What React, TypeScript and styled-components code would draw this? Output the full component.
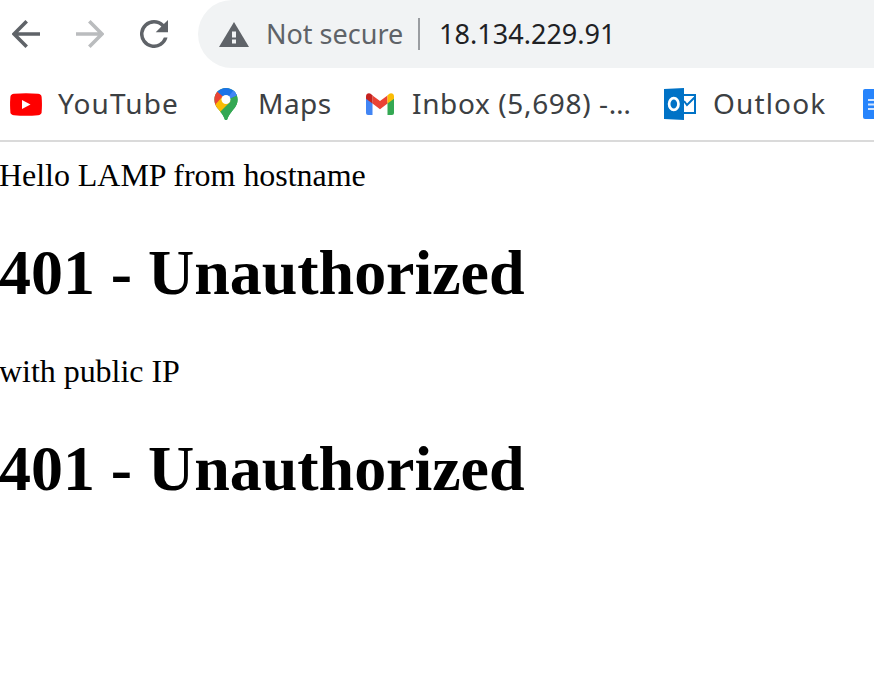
import React from 'react';
import styled, { createGlobalStyle } from 'styled-components';

const GlobalStyle = createGlobalStyle`
  * { box-sizing: border-box; }
  body { margin: 0; background: #fff; overflow: hidden; }
  svg { display: block; flex: none; }
`;

const Browser = styled.div`
  width: 100%;
  height: 684px;
  overflow: hidden;
  background: #fff;
`;

const Toolbar = styled.header`
  display: flex;
  height: 68px;
`;

const Navigation = styled.nav`
  display: flex;
  align-items: center;
  gap: 36px;
  flex: none;
  width: 198px;
  padding-left: 12px;
`;

const AddressBar = styled.div`
  display: flex;
  align-items: center;
  flex: 1;
  padding-left: 21px;
  border-radius: 34px 0 0 34px;
  background: #f1f3f4;
  font-family: 'Noto Sans', sans-serif;
  font-size: 27px;
  line-height: 68px;
  white-space: nowrap;
`;

const Security = styled.span`
  width: 152px;
  margin-left: 17px;
  color: #5f6368;
`;

const Divider = styled.span`
  width: 2px;
  height: 32px;
  margin-right: 19px;
  background: #9a9da1;
`;

const Address = styled.span`
  color: #202124;
  letter-spacing: 0.03px;
`;

const Bookmarks = styled.div`
  display: flex;
  align-items: center;
  height: 74px;
  padding: 0 0 2px 10px;
  border-bottom: 2px solid #dadada;
  overflow: hidden;
`;

const Bookmark = styled.div<{ $width: number; $gap: number; $tracking?: number }>`
  display: flex;
  align-items: center;
  flex: none;
  width: ${p => p.$width}px;
  gap: ${p => p.$gap}px;
  font-family: 'Noto Sans', sans-serif;
  font-size: 28px;
  line-height: 68px;
  letter-spacing: ${p => p.$tracking ?? 0}px;
  white-space: nowrap;
  color: #3c4043;

  svg { margin-top: 2px; }
`;

const Page = styled.main`
  margin-left: -1px;
  padding-top: 15px;
  font-family: 'Liberation Serif', serif;
  letter-spacing: -0.04px;
  color: #000;
`;

const Line = styled.p`
  margin: 0;
  font-size: 32px;
  line-height: 36px;
`;

const Heading = styled.h1`
  margin: 43px 0;
  font-size: 64px;
  line-height: 74px;
`;

const BackIcon = () => (
  <svg width="28" height="28" viewBox="0 0 28 28" fill="none" stroke="#5f6368" strokeWidth="3.6">
    <path d="M28 14H2.500M14.700 1.300 2 14l12.700 12.700" />
  </svg>
);

const ForwardIcon = () => (
  <svg width="28" height="28" viewBox="0 0 28 28" fill="none" stroke="#babcbe" strokeWidth="3.6">
    <path d="M0 14h25.500M13.300 1.300 26 14 13.300 26.700" />
  </svg>
);

const ReloadIcon = () => (
  <svg width="28" height="28" viewBox="4 4 16 16" fill="#5f6368">
    <path d="M17.65 6.35A7.96 7.96 0 0 0 12 4a8 8 0 1 0 7.73 10h-2.08A6 6 0 1 1 12 6c1.66 0 3.14.69 4.22 1.78L13 11h7V4z" />
  </svg>
);

const WarningIcon = () => (
  <svg width="30" height="25" viewBox="0 0 30 25">
    <path d="M15 0 30 25H0z" fill="#5f6368" />
    <path d="M13 9.500h4v6h-4zm0 8h4v4h-4z" fill="#f1f3f4" />
  </svg>
);

const YouTubeIcon = () => (
  <svg width="32" height="23" viewBox="0 0 32 24" preserveAspectRatio="none">
    <path d="M4 .9Q16-.2 28 .9 31.200 1.200 31.600 4q.7 8 0 16-.4 2.800-3.600 3.100-12 1.100-24 0Q.8 22.800.4 20q-.7-8 0-16Q.8 1.200 4 .9z" fill="#f00" />
    <path d="M12 7.300 20.500 12 12 16.700z" fill="#fff" />
  </svg>
);

const MapsIcon = () => (
  <svg width="24" height="32" viewBox="0 0 24 32">
    <defs>
      <clipPath id="pin">
        <path d="M12 0C5.400 0 .4 5 .4 11.500c0 5 2.500 8 5.600 11.700 2.500 3 4 5.800 4.700 8 .4 1.200 2.200 1.200 2.600 0 .7-2.200 2.200-5 4.700-8 3.100-3.700 5.600-6.700 5.600-11.700C23.600 5 18.600 0 12 0z" />
      </clipPath>
    </defs>
    <g clipPath="url(#pin)">
      <path d="M0 0h24v32H0z" fill="#34a853" />
      <path d="M0 0h24v7L12 12 3 4z" fill="#1a73e8" />
      <path d="M12 12 20 1.500 24 7z" fill="#4285f4" />
      <path d="M3 3.500 12 11 3 21H0V4z" fill="#ea4335" />
      <path d="M0 18 9 8l8 6L6.500 26z" fill="#fbbc04" />
      <path d="M24 6 6 24l2 8h16z" fill="#34a853" />
    </g>
    <circle cx="12" cy="11.500" r="4.500" fill="#fff" />
  </svg>
);

const GmailIcon = () => (
  <svg width="28" height="22" viewBox="0 0 28 22">
    <path d="M0 5l6.500 4.500V22H2Q0 22 0 20z" fill="#4285f4" />
    <path d="M21.500 9.500 28 5v15q0 2-2 2h-4.500z" fill="#34a853" />
    <path d="M6.500 2.500 14 8l7.500-5.500v8L14 16.200 6.500 10.500z" fill="#ea4335" />
    <path d="M0 3.300C0 .5 3-.6 5 1l1.500 1.500v8L0 5.700z" fill="#c5221f" />
    <path d="M28 3.300C28 .5 25-.6 23 1l-1.500 1.500v8L28 5.700z" fill="#fbbc04" />
  </svg>
);

const OutlookIcon = () => (
  <svg width="32" height="32" viewBox="0 0 32 32">
    <path d="M19 7h12v18H19M20 13l3 4 8-8" fill="none" stroke="#0072c6" strokeWidth="2" />
    <path d="M0 1 20 0v32L0 31z" fill="#0072c6" />
    <ellipse cx="9.800" cy="16" rx="4.700" ry="5.900" fill="none" stroke="#fff" strokeWidth="2.700" />
  </svg>
);

const DocumentIcon = () => (
  <svg width="24" height="30" viewBox="0 0 24 30">
    <rect width="24" height="30" rx="2" fill="#2684fc" />
    <path d="M5 11h14M5 15.500h14M5 20h14" stroke="#d3e5fd" strokeWidth="2" />
  </svg>
);

export default function App() {
  return (
    <Browser>
      <GlobalStyle />
      <Toolbar>
        <Navigation>
          <BackIcon />
          <ForwardIcon />
          <ReloadIcon />
        </Navigation>
        <AddressBar>
          <WarningIcon />
          <Security>Not secure</Security>
          <Divider />
          <Address>18.134.229.91</Address>
        </AddressBar>
      </Toolbar>
      <Bookmarks>
        <Bookmark $width={204} $gap={16} $tracking={1.1}><YouTubeIcon />YouTube</Bookmark>
        <Bookmark $width={152} $gap={20} $tracking={0.5}><MapsIcon />Maps</Bookmark>
        <Bookmark $width={298} $gap={18} $tracking={0.64}><GmailIcon />Inbox (5,698) -…</Bookmark>
        <Bookmark $width={199} $gap={17} $tracking={1.15}><OutlookIcon />Outlook</Bookmark>
        <Bookmark $width={24} $gap={0}><DocumentIcon /></Bookmark>
      </Bookmarks>
      <Page>
        <Line>Hello LAMP from hostname</Line>
        <Heading>401 - Unauthorized</Heading>
        <Line>with public IP</Line>
        <Heading>401 - Unauthorized</Heading>
      </Page>
    </Browser>
  );
}
